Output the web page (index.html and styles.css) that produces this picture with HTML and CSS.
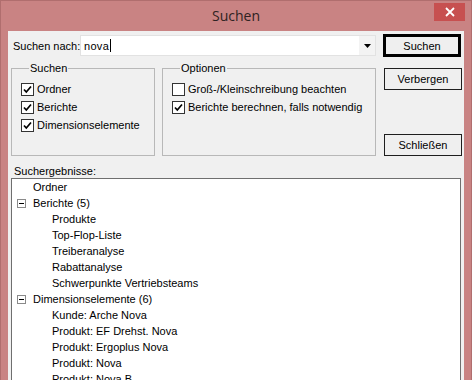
FILE: index.html
```html
<!DOCTYPE html>
<html lang="de">
<head>
<meta charset="utf-8">
<title>Suchen</title>
<link rel="stylesheet" href="styles.css">
</head>
<body>
<div class="window">
  <div class="titlebar">
    <span class="tb-spacer"></span>
    <span class="title">Suchen</span>
    <div class="tb-right">
      <button class="close" aria-label="Schließen">
        <svg width="10" height="10" viewBox="0 0 10 10"><path d="M1 1 L9 9 M9 1 L1 9" stroke="#fff" stroke-width="1.8" fill="none"/></svg>
      </button>
    </div>
  </div>
  <div class="client">
    <div class="search-row">
      <label class="search-label">Suchen nach:</label>
      <div class="combo">
        <span class="combo-text">nova</span><span class="caret"></span>
        <span class="combo-btn"><svg width="7" height="4" viewBox="0 0 7 4"><path d="M0 0 H7 L3.5 4 Z" fill="#000"/></svg></span>
      </div>
      <button class="btn btn-default">Suchen</button>
    </div>
    <div class="options-row">
      <fieldset class="group group-search">
        <legend>Suchen</legend>
        <div class="check-row"><span class="cb checked"><svg width="11" height="11" viewBox="0 0 11 11"><path d="M2 5.5 L4.3 8 L9 2.5" stroke="#000" stroke-width="1.7" fill="none"/></svg></span>Ordner</div>
        <div class="check-row"><span class="cb checked"><svg width="11" height="11" viewBox="0 0 11 11"><path d="M2 5.5 L4.3 8 L9 2.5" stroke="#000" stroke-width="1.7" fill="none"/></svg></span>Berichte</div>
        <div class="check-row"><span class="cb checked"><svg width="11" height="11" viewBox="0 0 11 11"><path d="M2 5.5 L4.3 8 L9 2.5" stroke="#000" stroke-width="1.7" fill="none"/></svg></span>Dimensionselemente</div>
      </fieldset>
      <fieldset class="group group-opts">
        <legend>Optionen</legend>
        <div class="check-row"><span class="cb"></span>Groß-/Kleinschreibung beachten</div>
        <div class="check-row"><span class="cb checked"><svg width="11" height="11" viewBox="0 0 11 11"><path d="M2 5.5 L4.3 8 L9 2.5" stroke="#000" stroke-width="1.7" fill="none"/></svg></span>Berichte berechnen, falls notwendig</div>
      </fieldset>
      <div class="side-buttons">
        <button class="btn">Verbergen</button>
        <button class="btn">Schließen</button>
      </div>
    </div>
    <div class="results-label">Suchergebnisse:</div>
    <div class="tree">
      <div class="row lvl0"><span class="exp-none"></span>Ordner</div>
      <div class="row lvl0"><span class="exp"></span>Berichte (5)</div>
      <div class="row lvl1">Produkte</div>
      <div class="row lvl1">Top-Flop-Liste</div>
      <div class="row lvl1">Treiberanalyse</div>
      <div class="row lvl1">Rabattanalyse</div>
      <div class="row lvl1">Schwerpunkte Vertriebsteams</div>
      <div class="row lvl0"><span class="exp"></span>Dimensionselemente (6)</div>
      <div class="row lvl1">Kunde: Arche Nova</div>
      <div class="row lvl1">Produkt: EF Drehst. Nova</div>
      <div class="row lvl1">Produkt: Ergoplus Nova</div>
      <div class="row lvl1">Produkt: Nova</div>
      <div class="row lvl1">Produkt: Nova B</div>
    </div>
  </div>
</div>
</body>
</html>
```
FILE: styles.css
```css
* { box-sizing: border-box; }
html, body { margin: 0; padding: 0; }
body {
  width: 472px;
  height: 380px;
  overflow: hidden;
  background: #c98383;
  font-family: "Liberation Sans", Arial, sans-serif;
  font-size: 11px;
  color: #000;
}
.window {
  width: 472px;
  height: 380px;
  border: 1px solid #b06e6e;
  border-bottom: none;
  background: #c98383;
  display: flex;
  flex-direction: column;
  overflow: hidden;
}
.titlebar {
  flex: none;
  height: 30px;
  display: grid;
  grid-template-columns: 1fr auto 1fr;
  align-items: start;
}
.title {
  font-family: "Open Sans", "Noto Sans", sans-serif;
  font-size: 14px;
  line-height: 30px;
  color: #2e2222;
}
.tb-right { justify-self: end; }
.close {
  display: flex;
  align-items: center;
  justify-content: center;
  width: 31px;
  height: 18px;
  margin: 2px 6px 0 0;
  padding: 0;
  border: none;
  background: #c75050;
}
.client {
  margin: 0 7px;
  flex: 1;
  min-height: 0;
  background: #f0f0f0;
  overflow: hidden;
  display: flex;
  flex-direction: column;
}
.client > * { flex: none; }
.search-row {
  display: flex;
  align-items: center;
  height: 23px;
  margin-top: 3px;
}
.search-label {
  width: 72px;
  padding-left: 5px;
  white-space: nowrap;
}
.combo {
  width: 296px;
  height: 21px;
  background: #fff;
  border: 1px solid #e2e2e2;
  display: flex;
  align-items: center;
}
.combo-text { padding-left: 3px; letter-spacing: 0.3px; }
.caret {
  width: 1px;
  height: 13px;
  background: #000;
  margin-left: 1px;
}
.combo-btn {
  margin-left: auto;
  width: 16px;
  height: 19px;
  background: #f3f3f3;
  display: flex;
  align-items: center;
  justify-content: center;
}
.btn {
  width: 78px;
  height: 22px;
  padding: 0;
  font: inherit;
  color: #000;
  background: #efefef;
  border: 1px solid #1e1e1e;
}
.btn-default {
  height: 23px;
  margin-left: 7px;
  border: 3px solid #000;
}
.options-row {
  display: flex;
  align-items: stretch;
  margin-top: 5px;
  height: 94px;
}
.group {
  margin: 0;
  height: 94px;
  padding: 5px 0 0 9px;
  border: 1px solid #b8b8b8;
  min-width: 0;
}
.group legend {
  padding: 0 1px;
  margin-left: 8px;
  line-height: 13px;
}
.group-search { width: 144px; margin-left: 3px; }
.group-opts { width: 214px; margin-left: 7px; }
.check-row {
  display: flex;
  align-items: center;
  height: 18px;
  white-space: nowrap;
}
.cb {
  width: 13px;
  height: 13px;
  border: 1px solid #333;
  background: #fff;
  margin-right: 3px;
  display: flex;
  align-items: center;
  justify-content: center;
  flex: none;
}
.side-buttons {
  margin-left: 8px;
  padding: 6px 0 0;
  display: flex;
  flex-direction: column;
  justify-content: space-between;
}
.results-label {
  margin-top: 9px;
  padding-left: 6px;
  line-height: 13px;
  height: 13px;
}
.tree {
  margin: 0 3px;
  height: 240px;
  background: #fff;
  border: 1px solid #6f6f6f;
  padding-top: 0;
}
.row {
  height: 16px;
  line-height: 16px;
  display: flex;
  align-items: center;
  white-space: nowrap;
}
.lvl0 { padding-left: 5px; }
.lvl1 { padding-left: 40px; }
.exp, .exp-none {
  width: 9px;
  height: 9px;
  margin-right: 7px;
  flex: none;
}
.exp {
  border: 1px solid #8a8a8a;
  background: #fff;
  position: relative;
}
.exp::after {
  content: "";
  position: absolute;
  left: 1px;
  top: 3px;
  width: 5px;
  height: 1px;
  background: #000;
}
```
